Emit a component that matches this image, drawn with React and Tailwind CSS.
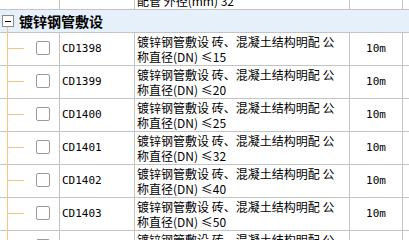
import React from 'react';

const rows = [
  { code: 'CD1398', size: '15' },
  { code: 'CD1399', size: '20' },
  { code: 'CD1400', size: '25' },
  { code: 'CD1401', size: '32' },
  { code: 'CD1402', size: '40' },
  { code: 'CD1403', size: '50' },
  { code: 'CD1404', size: '65' },
];

const cjk = { fontFamily: '"Noto Sans CJK SC", "Noto Sans", sans-serif' };
const mono = { fontFamily: '"DejaVu Sans Mono", "Liberation Mono", monospace' };

function Row({ code, line1, line2, unit, tree = true, className = '' }) {
  return (
    <div className={`flex h-[33px] border-b border-[#c3c3c3] ${className}`}>
      <div className="relative w-[60px] shrink-0 border-r border-[#c3c3c3]">
        {tree && (
          <>
            <div className="absolute left-[7px] top-0 -bottom-px w-px bg-[#f6c67f]" />
            <div className="absolute left-[7px] top-[15px] h-px w-[17px] bg-[#f6c67f]" />
            <div className="absolute left-[36px] top-[8px] h-[14px] w-[14px] rounded-[2px] border border-[#9a9a9a] bg-white" />
          </>
        )}
      </div>
      <div className="flex w-[75px] shrink-0 items-center border-r border-[#c3c3c3] pl-[2px] text-[11px] text-black" style={mono}>
        {code}
      </div>
      <div className="w-[215px] shrink-0 overflow-hidden border-r border-[#c3c3c3] pl-[2px] pt-[1px] text-[12px] leading-[15px] text-black" style={cjk}>
        <div className="whitespace-nowrap">{line1}</div>
        <div className="whitespace-nowrap">{line2}</div>
      </div>
      <div className="flex w-[53px] shrink-0 items-center justify-center border-r border-[#c3c3c3] text-[11px] text-black" style={mono}>
        {unit}
      </div>
      <div className="flex-1" />
    </div>
  );
}

export default function App() {
  return (
    <div className="h-[240px] w-[409px] overflow-hidden bg-white">
      {/* previous row, mostly scrolled out */}
      <Row
        className="-mt-[23px]"
        tree={false}
        code=""
        line1="镀锌钢管敷设 砖、混凝土结构明"
        line2="配管 外径(mm) 32"
        unit=""
      />

      {/* group header */}
      <div className="relative flex h-[23px] items-center border-b border-[#c3c3c3] bg-[#e6f0fb]">
        <div className="absolute left-[7px] top-[15px] -bottom-px w-px bg-[#f6c67f]" />
        <div className="relative ml-[2px] flex h-[12px] w-[12px] items-center justify-center border border-[#8a8a8a] bg-white">
          <div className="h-px w-[6px] bg-black" />
        </div>
        <span className="ml-[5px] text-[14px] font-bold text-black" style={cjk}>
          镀锌钢管敷设
        </span>
      </div>

      {rows.map((r) => (
        <Row
          key={r.code}
          code={r.code}
          line1="镀锌钢管敷设 砖、混凝土结构明配 公"
          line2={`称直径(DN) ≤${r.size}`}
          unit="10m"
        />
      ))}
    </div>
  );
}
